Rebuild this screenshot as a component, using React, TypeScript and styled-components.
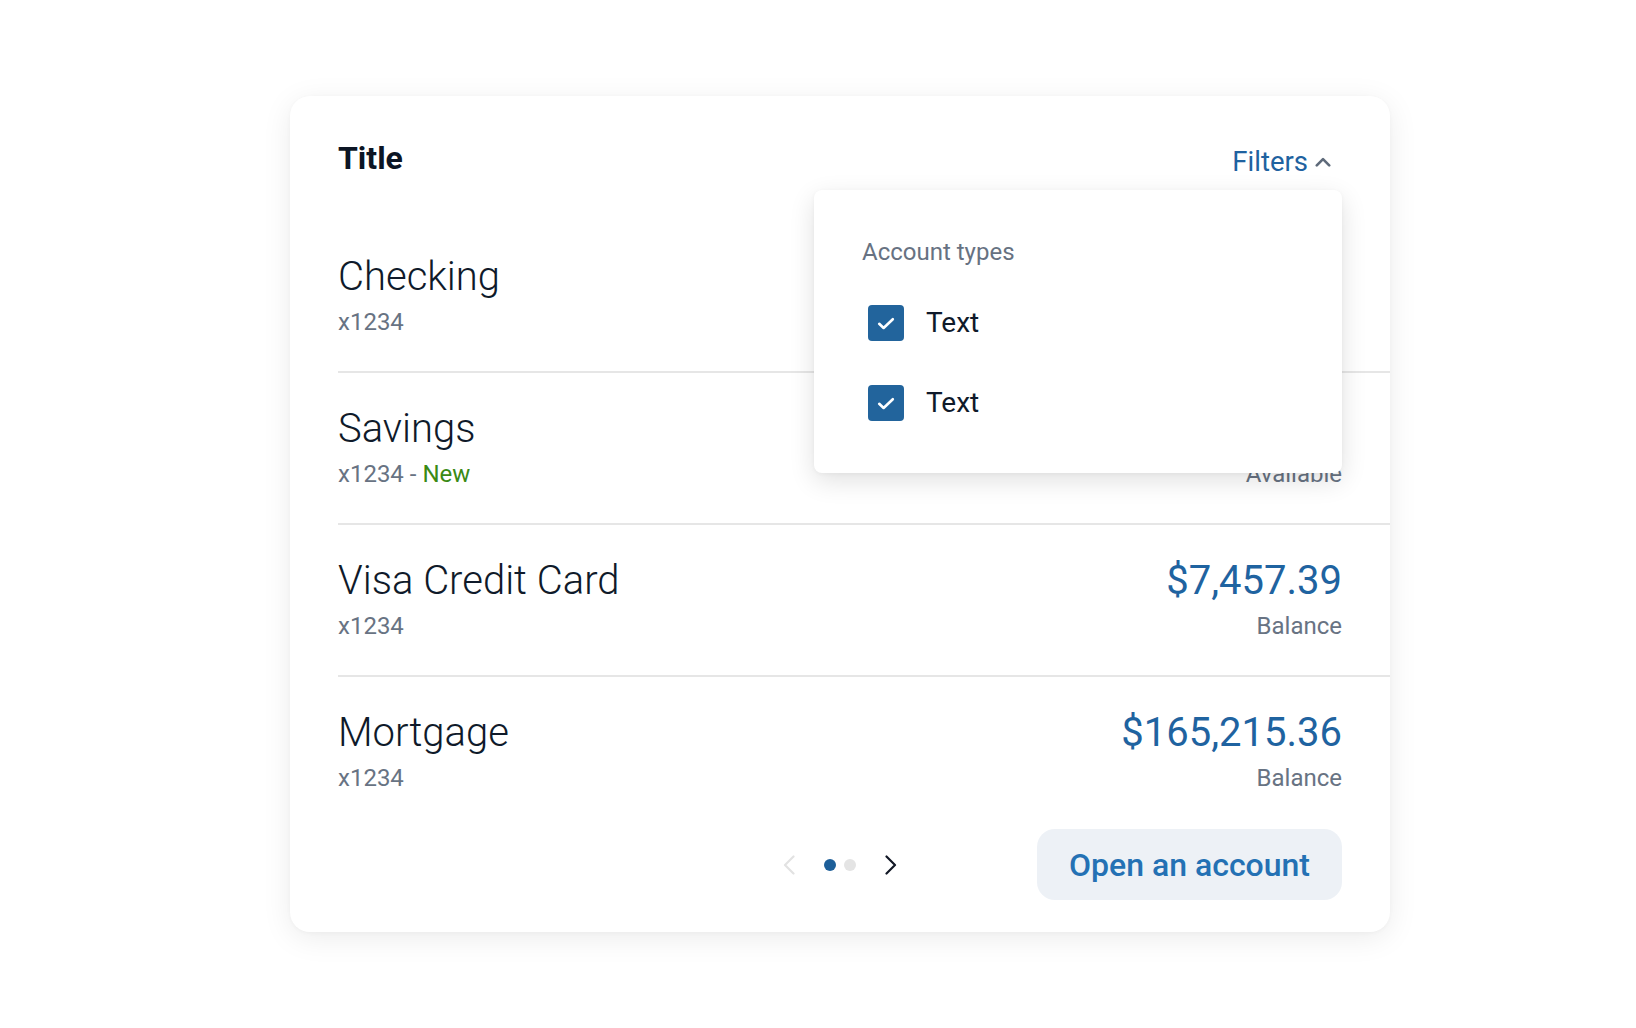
import React from "react";
import styled, { createGlobalStyle } from "styled-components";

type Account = {
  id: string;
  name: string;
  number: string;
  isNew?: boolean;
  amount: string;
  amountLabel: string;
};

const accounts: Account[] = [
  { id: "chk", name: "Checking", number: "x1234", amount: "$1,250.00", amountLabel: "Available" },
  { id: "sav", name: "Savings", number: "x1234", isNew: true, amount: "$2,100.00", amountLabel: "Available" },
  { id: "visa", name: "Visa Credit Card", number: "x1234", amount: "$7,457.39", amountLabel: "Balance" },
  { id: "mtg", name: "Mortgage", number: "x1234", amount: "$165,215.36", amountLabel: "Balance" },
];

const GlobalStyle = createGlobalStyle`
  html, body {
    margin: 0;
    padding: 0;
    background: #fff;
  }
  body {
    font-family: Roboto, "Noto Sans", "Liberation Sans", sans-serif;
    -webkit-font-smoothing: antialiased;
  }
  * {
    box-sizing: border-box;
  }
`;

const Page = styled.div`
  padding: 96px 0 96px 290px;
`;

const Card = styled.section`
  position: relative;
  width: 1100px;
  background: #fff;
  border-radius: 20px;
  box-shadow: 0 6px 30px rgba(0, 0, 0, 0.08), 0 1px 4px rgba(0, 0, 0, 0.03);
  padding: 42px 0 32px 48px;
`;

const Header = styled.header`
  display: flex;
  justify-content: space-between;
  align-items: flex-start;
  padding-right: 48px;
  margin-bottom: 39px;
`;

const Title = styled.h2`
  margin: 0;
  font-size: 32px;
  line-height: 40px;
  font-weight: 700;
  color: #0c1524;
`;

const FiltersButton = styled.button`
  display: inline-flex;
  align-items: center;
  gap: 7px;
  margin-top: 4px;
  padding: 0 11px 0 0;
  border: none;
  background: transparent;
  font-family: inherit;
  font-size: 27.5px;
  line-height: 40px;
  font-weight: 400;
  color: #1f62a0;
  cursor: pointer;
`;

const Dropdown = styled.div`
  position: absolute;
  top: 94px;
  right: 48px;
  width: 528px;
  padding: 48px 48px 52px;
  background: #fff;
  border-radius: 8px;
  box-shadow: 0 8px 26px rgba(0, 0, 0, 0.12), 0 1px 4px rgba(0, 0, 0, 0.04);
  z-index: 2;
`;

const DropdownLabel = styled.div`
  font-size: 24px;
  line-height: 28px;
  color: #677282;
  margin-bottom: 39px;
`;

const CheckList = styled.div`
  display: flex;
  flex-direction: column;
  gap: 44px;
`;

const CheckRow = styled.label`
  display: flex;
  align-items: center;
  gap: 22px;
  padding-left: 6px;
  cursor: pointer;
`;

const CheckBox = styled.span<{ checked: boolean }>`
  display: flex;
  align-items: center;
  justify-content: center;
  width: 36px;
  height: 36px;
  border-radius: 4px;
  background: ${({ checked }) => (checked ? "#22649c" : "#fff")};
  border: ${({ checked }) => (checked ? "none" : "2px solid #8a94a3")};
`;

const CheckText = styled.span`
  font-size: 28px;
  line-height: 36px;
  color: #0f1a2a;
`;

const AccountList = styled.ul`
  list-style: none;
  margin: 0;
  padding: 0;
`;

const AccountRow = styled.li`
  display: flex;
  justify-content: space-between;
  align-items: flex-start;
  padding: 32px 48px 31px 0;
  border-bottom: 2px solid #e6e6e6;

  &:last-child {
    border-bottom: none;
  }
`;

const Column = styled.div<{ align: "left" | "right" }>`
  display: flex;
  flex-direction: column;
  gap: 3px;
  text-align: ${({ align }) => align};
`;

const AccountName = styled.div`
  font-size: 40px;
  line-height: 48px;
  font-weight: 300;
  color: #0f1a2a;
`;

const Meta = styled.div`
  font-size: 24px;
  line-height: 36px;
  color: #687383;
`;

const NewTag = styled.span`
  color: #3a8a14;
`;

const Amount = styled.div`
  font-size: 40px;
  line-height: 48px;
  font-weight: 400;
  color: #1f63a0;
`;

const Footer = styled.footer`
  display: grid;
  grid-template-columns: 1fr auto 1fr;
  align-items: center;
  padding-right: 48px;
  margin-top: 2px;
`;

const Pager = styled.nav`
  grid-column: 2;
  display: flex;
  align-items: center;
  gap: 23px;
`;

const ArrowButton = styled.button<{ disabled?: boolean }>`
  display: flex;
  align-items: center;
  justify-content: center;
  width: 24px;
  height: 24px;
  padding: 0;
  border: none;
  background: transparent;
  color: ${({ disabled }) => (disabled ? "#e2e2e2" : "#121826")};
  cursor: ${({ disabled }) => (disabled ? "default" : "pointer")};
`;

const Dots = styled.div`
  display: flex;
  gap: 8px;
`;

const Dot = styled.span<{ active: boolean }>`
  width: 12px;
  height: 12px;
  border-radius: 50%;
  background: ${({ active }) => (active ? "#1d5f99" : "#e4e4e4")};
`;

const OpenButton = styled.button`
  grid-column: 3;
  justify-self: end;
  height: 71px;
  padding: 0 32px;
  border: none;
  border-radius: 18px;
  background: #edf1f6;
  font-family: inherit;
  font-size: 32px;
  font-weight: 500;
  color: #2471b4;
  cursor: pointer;
`;

const ChevronUp = () => (
  <svg width="16" height="10" viewBox="0 0 16 10" fill="none">
    <path d="M1.8 8.4 L8 2.2 L14.2 8.4" stroke="#5e6a7a" strokeWidth="2.6" strokeLinecap="round" strokeLinejoin="round" />
  </svg>
);

const ChevronSide = ({ dir }: { dir: "left" | "right" }) => (
  <svg width="12" height="20" viewBox="0 0 12 20" fill="none">
    <path
      d={dir === "left" ? "M10.5 1.5 L2 10 L10.5 18.5" : "M1.5 1.5 L10 10 L1.5 18.5"}
      stroke="currentColor"
      strokeWidth="2.2"
      strokeLinecap="round"
      strokeLinejoin="round"
    />
  </svg>
);

const CheckMark = () => (
  <svg width="18" height="13" viewBox="0 0 18 13" fill="none">
    <path d="M2.2 6.8 L6.6 11 L15.8 2.2" stroke="#fff" strokeWidth="2.6" strokeLinecap="round" strokeLinejoin="round" />
  </svg>
);

const filterOptions = [
  { id: "a", label: "Text", checked: true },
  { id: "b", label: "Text", checked: true },
];

const App = () => {
  return (
    <Page>
      <GlobalStyle />
      <Card>
        <Header>
          <Title>Title</Title>
          <FiltersButton>
            Filters
            <ChevronUp />
          </FiltersButton>
        </Header>

        <Dropdown>
          <DropdownLabel>Account types</DropdownLabel>
          <CheckList>
            {filterOptions.map((option) => (
              <CheckRow key={option.id}>
                <CheckBox checked={option.checked}>{option.checked && <CheckMark />}</CheckBox>
                <CheckText>{option.label}</CheckText>
              </CheckRow>
            ))}
          </CheckList>
        </Dropdown>

        <AccountList>
          {accounts.map((account) => (
            <AccountRow key={account.id}>
              <Column align="left">
                <AccountName>{account.name}</AccountName>
                <Meta>
                  {account.number}
                  {account.isNew && (
                    <>
                      {" - "}
                      <NewTag>New</NewTag>
                    </>
                  )}
                </Meta>
              </Column>
              <Column align="right">
                <Amount>{account.amount}</Amount>
                <Meta>{account.amountLabel}</Meta>
              </Column>
            </AccountRow>
          ))}
        </AccountList>

        <Footer>
          <Pager>
            <ArrowButton disabled aria-label="Previous">
              <ChevronSide dir="left" />
            </ArrowButton>
            <Dots>
              <Dot active />
              <Dot active={false} />
            </Dots>
            <ArrowButton aria-label="Next">
              <ChevronSide dir="right" />
            </ArrowButton>
          </Pager>
          <OpenButton>Open an account</OpenButton>
        </Footer>
      </Card>
    </Page>
  );
};

export default App;
